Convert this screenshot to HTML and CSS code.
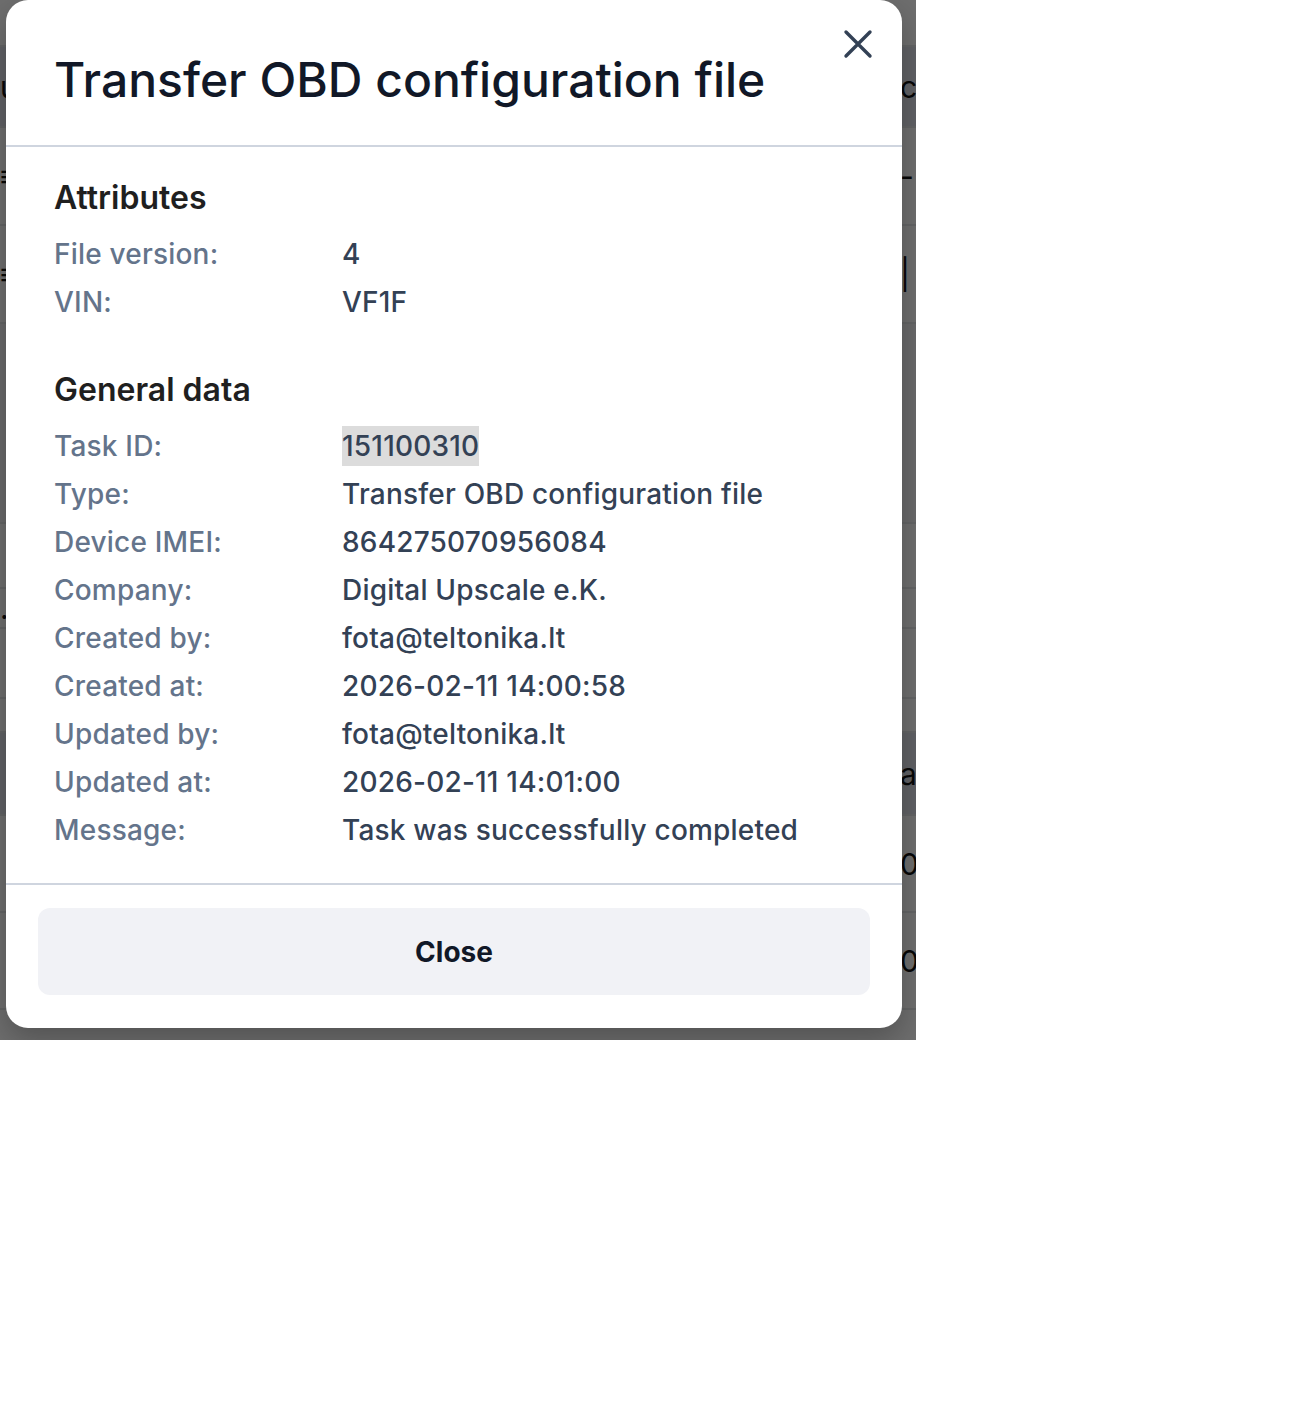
FILE: index.html
```html
<!DOCTYPE html>
<html lang="en">
<head>
  <meta charset="UTF-8" />
  <meta name="viewport" content="width=device-width, initial-scale=1.0"/>
  <title>Task details</title>
  <link rel="stylesheet" href="styles.css">
</head>
<body>
  <div class="screen">
    <div class="table">
      <div class="row r1"><span class="lcell"></span><span class="rcell"></span></div>
      <div class="row r2 band"><span class="lcell">u</span><span class="rcell">c</span></div>
      <div class="row r3"><span class="lcell">≡</span><span class="rcell">-</span></div>
      <div class="row r3"><span class="lcell">≡</span><span class="rcell">|</span></div>
      <div class="row r4 band-light"><span class="lcell"></span><span class="rcell"></span></div>
      <div class="row r5"><span class="lcell"></span><span class="rcell"></span></div>
      <div class="row r6"><span class="lcell">.</span><span class="rcell"></span></div>
      <div class="row r7"><span class="lcell"></span><span class="rcell"></span></div>
      <div class="row r8"><span class="lcell"></span><span class="rcell"></span></div>
      <div class="row r9 band"><span class="lcell"></span><span class="rcell">at</span></div>
      <div class="row r10"><span class="lcell"></span><span class="rcell">00</span></div>
      <div class="row r10"><span class="lcell"></span><span class="rcell">01</span></div>
    </div>
    <div class="overlay"></div>

    <div class="modal">
      <div class="modal-header">
        <h2>Transfer OBD configuration file</h2>
        <button class="close-x" aria-label="Close">
          <svg width="30" height="30" viewBox="0 0 30 30" fill="none">
            <path d="M3 3L27 27M27 3L3 27" stroke="#334155" stroke-width="3.4" stroke-linecap="round"/>
          </svg>
        </button>
      </div>

      <div class="modal-body">
        <h3>Attributes</h3>
        <dl class="details">
          <dt>File version:</dt><dd>4</dd>
          <dt>VIN:</dt><dd>VF1F</dd>
        </dl>

        <h3 class="section">General data</h3>
        <dl class="details">
          <dt>Task ID:</dt><dd><span class="selected">151100310</span></dd>
          <dt>Type:</dt><dd>Transfer OBD configuration file</dd>
          <dt>Device IMEI:</dt><dd>864275070956084</dd>
          <dt>Company:</dt><dd>Digital Upscale e.K.</dd>
          <dt>Created by:</dt><dd>fota@teltonika.lt</dd>
          <dt>Created at:</dt><dd>2026-02-11 14:00:58</dd>
          <dt>Updated by:</dt><dd>fota@teltonika.lt</dd>
          <dt>Updated at:</dt><dd>2026-02-11 14:01:00</dd>
          <dt>Message:</dt><dd>Task was successfully completed</dd>
        </dl>
      </div>

      <div class="modal-footer">
        <button class="btn">Close</button>
      </div>
    </div>
  </div>
</body>
</html>
```

FILE: styles.css
```css
* { box-sizing: border-box; }

body {
  margin: 0;
  background: #fff;
  font-family: 'Inter', 'Noto Sans', sans-serif;
}

.screen {
  position: relative;
  width: 916px;
  height: 1040px;
  overflow: hidden;
  background: #fff;
}

/* page behind the dialog */
.table {
  display: flex;
  flex-direction: column;
}

.row {
  display: grid;
  grid-template-columns: 898px 1fr;
  align-items: center;
  border-bottom: 2px solid #e5e7eb;
  font-size: 30px;
  color: #111;
}

.rcell { padding-left: 2px; }

.band { background: #dfe2ea; }
.band-light { background: #f3f4f6; }

.r1 { height: 47px; }
.r2 { height: 81px; }
.r3 { height: 98px; }
.r4 { height: 200px; }
.r5 { height: 65px; }
.r6 { height: 40px; }
.r7 { height: 70px; }
.r8 { height: 34px; }
.r9 { height: 83px; }
.r10 { height: 97px; }

.overlay {
  position: absolute;
  inset: 0;
  background: rgba(0, 0, 0, 0.57);
}

.modal {
  position: absolute;
  left: 6px;
  top: 0;
  width: 896px;
  background: #fff;
  border-radius: 22px;
  box-shadow: 0 12px 30px rgba(0, 0, 0, 0.25);
}

.modal-header {
  position: relative;
  padding: 51px 48px 36px;
  border-bottom: 2px solid #cfd5df;
}

.modal-header h2 {
  margin: 0;
  font-size: 48px;
  line-height: 58px;
  font-weight: 500;
  color: #111827;
}

.close-x {
  position: absolute;
  top: 29px;
  right: 29px;
  padding: 0;
  border: none;
  background: none;
  cursor: pointer;
}

.modal-body {
  padding: 31px 48px 29px;
}

.modal-body h3 {
  margin: 0 0 12px;
  font-size: 32px;
  line-height: 40px;
  font-weight: 600;
  color: #1f1f1f;
}

.modal-body h3.section {
  margin-top: 44px;
}

.details {
  display: grid;
  grid-template-columns: 288px 1fr;
  margin: 0;
  font-size: 28px;
  line-height: 48px;
  letter-spacing: 0.2px;
}

.details dt {
  color: #64748b;
  font-weight: 500;
}

.details dd {
  margin: 0;
  color: #334155;
  font-weight: 500;
}

.selected {
  background: #dcdcdc;
  padding: 3px 0;
}

.modal-footer {
  border-top: 2px solid #cfd5df;
  padding: 23px 32px 33px;
}

.btn {
  display: block;
  width: 100%;
  height: 87px;
  border: none;
  border-radius: 12px;
  background: #f1f2f6;
  font-family: inherit;
  font-size: 28px;
  font-weight: 700;
  color: #111827;
  cursor: pointer;
}
```
